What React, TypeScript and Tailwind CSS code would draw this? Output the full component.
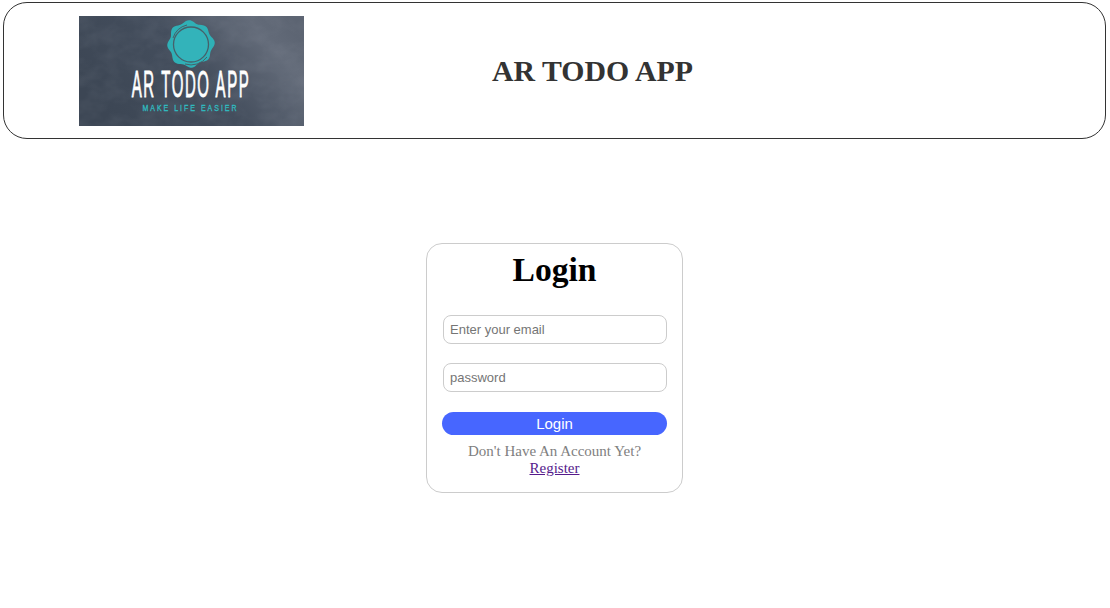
import React from 'react'

// wavy badge outline, eight soft lobes
function sealPath(cx: number, cy: number) {
  const pts: string[] = []
  for (let i = 0; i < 96; i++) {
    const a = (i / 96) * Math.PI * 2
    const r = 22.5 + 1.3 * Math.cos(8 * a + 0.5) + 0.5 * Math.cos(3 * a)
    pts.push(`${(cx + r * Math.cos(a)).toFixed(2)} ${(cy + r * Math.sin(a)).toFixed(2)}`)
  }
  return 'M' + pts.join('L') + 'Z'
}

function Logo() {
  return (
    <svg width="225" height="110" viewBox="0 0 225 110" className="block shrink-0">
      <defs>
        <linearGradient id="slate" x1="0" y1="0.6" x2="1" y2="0.2">
          <stop offset="0" stopColor="#3c4654" />
          <stop offset="0.5" stopColor="#444e5d" />
          <stop offset="0.85" stopColor="#636b79" />
          <stop offset="1" stopColor="#5c6472" />
        </linearGradient>
        <filter id="grain" x="0" y="0" width="100%" height="100%">
          <feTurbulence type="fractalNoise" baseFrequency="0.05 0.07" numOctaves="3" seed="11" />
          <feColorMatrix values="0 0 0 0 0.7  0 0 0 0 0.73  0 0 0 0 0.8  0.6 0 0 0 -0.2" />
        </filter>
      </defs>
      <rect width="225" height="110" fill="url(#slate)" />
      <rect width="225" height="110" filter="url(#grain)" opacity="0.2" />
      <path d={sealPath(111.5, 28)} fill="#2fb0b6" />
      <circle cx="112" cy="28.5" r="17.5" fill="#33b3ba" stroke="#47606a" strokeWidth="1.3" />
      <path d="M94 22 A19.5 19.5 0 0 1 108 9" fill="none" stroke="#47606a" strokeWidth="1" />
      <path d="M128 41 A20 20 0 0 1 106 48" fill="none" stroke="#47606a" strokeWidth="1" />
      <text
        x="112"
        y="0"
        transform="translate(0 81) scale(1 2.45)"
        textAnchor="middle"
        fontFamily="'Liberation Sans', sans-serif"
        fontSize="15"
        letterSpacing="1.6"
        fill="#ffffff"
        stroke="#ffffff"
        strokeWidth="0.35"
      >
        AR TODO APP
      </text>
      <text
        x="111.5"
        y="0"
        transform="translate(0 95) scale(1 1.4)"
        textAnchor="middle"
        fontFamily="'Liberation Sans', sans-serif"
        fontSize="7"
        letterSpacing="2"
        fill="#30bcc0"
        stroke="#30bcc0"
        strokeWidth="0.25"
      >
        MAKE LIFE EASIER
      </text>
    </svg>
  )
}

export default function App() {
  return (
    <div className="min-h-[608px] bg-white font-['Liberation_Serif',serif]">
      <header className="ml-[3px] mt-[2px] flex h-[137px] w-[1103px] items-center rounded-[24px] border border-[#333] pl-[75px]">
        <Logo />
        <h1 className="ml-[188px] text-[29.8px] font-bold leading-none text-[#333]">AR TODO APP</h1>
      </header>
      <div className="mt-[104px] flex justify-center">
        <form className="mr-[1px] flex h-[250px] w-[257px] flex-col items-center rounded-[16px] border border-[#ccc] px-[15px]">
          <h2 className="mt-[6px] text-[33.6px] font-bold leading-[40px] text-black">Login</h2>
          <input
            placeholder="Enter your email"
            className="mt-[25px] h-[29px] w-[224px] self-end rounded-[8px] border border-[#ccc] px-[6px] font-['Liberation_Sans',sans-serif] text-[13px] placeholder:text-[#757575]"
          />
          <input
            placeholder="password"
            className="mt-[19px] h-[29px] w-[224px] self-end rounded-[8px] border border-[#ccc] px-[6px] font-['Liberation_Sans',sans-serif] text-[13px] placeholder:text-[#757575]"
          />
          <button
            type="button"
            className="mt-[20px] h-[23px] w-[225px] rounded-full bg-[#4766ff] font-['Liberation_Sans',sans-serif] text-[15px] leading-[23px] text-white"
          >
            Login
          </button>
          <p className="mt-[8px] text-center text-[15px] leading-[17px] text-[#808080]">
            Don't Have An Account Yet?
          </p>
          <a href="#" className="text-center text-[15px] leading-[17px] text-[#551a8b] underline">
            Register
          </a>
        </form>
      </div>
    </div>
  )
}
